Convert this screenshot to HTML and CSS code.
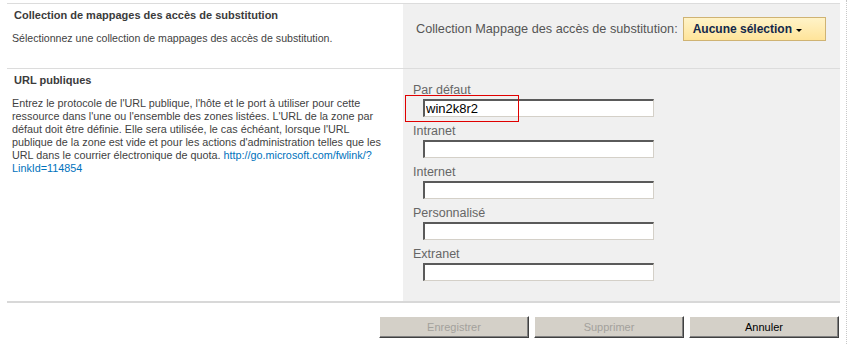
FILE: index.html
```html
<!DOCTYPE html>
<html lang="fr">
<head>
    <meta charset="UTF-8">
    <title>Mappages des accès de substitution</title>
    <link rel="stylesheet" href="styles.css">
</head>
<body>
    <div class="page">
        <div class="form">
            <div class="section first">
                <div class="desc-cell">
                    <h3 class="title">Collection de mappages des accès de substitution</h3>
                    <div class="desc short">Sélectionnez une collection de mappages des accès de substitution.</div>
                </div>
                <div class="ctrl-cell ctrl-inline">
                    <span class="ctrl-text">Collection Mappage des accès de substitution:</span>
                    <button class="picker">Aucune sélection <span class="arrow"></span></button>
                </div>
            </div>

            <div class="section">
                <div class="desc-cell">
                    <h3 class="title">URL publiques</h3>
                    <div class="desc">Entrez le protocole de l'URL publique, l'hôte et le port à utiliser pour cette ressource dans l'une ou l'ensemble des zones listées. L'URL de la zone par défaut doit être définie. Elle sera utilisée, le cas échéant, lorsque l'URL publique de la zone est vide et pour les actions d'administration telles que les URL dans le courrier électronique de quota. <a href="#">http://go.microsoft.com/fwlink/?<wbr>LinkId=114854</a></div>
                </div>
                <div class="ctrl-cell zones">
                    <div class="field">
                        <label>Par défaut</label>
                        <input type="text" value="win2k8r2">
                        <div class="highlight"></div>
                    </div>
                    <div class="field">
                        <label>Intranet</label>
                        <input type="text">
                    </div>
                    <div class="field">
                        <label>Internet</label>
                        <input type="text">
                    </div>
                    <div class="field">
                        <label>Personnalisé</label>
                        <input type="text">
                    </div>
                    <div class="field">
                        <label>Extranet</label>
                        <input type="text">
                    </div>
                </div>
            </div>

            <div class="buttons">
                <button class="btn" disabled>Enregistrer</button>
                <button class="btn" disabled>Supprimer</button>
                <button class="btn">Annuler</button>
            </div>
        </div>
    </div>
</body>
</html>
```

FILE: styles.css
```css
body {
    margin: 0;
    background: #fff;
    font-family: 'Liberation Sans', Arial, sans-serif;
    color: #4c4c4c;
}

.page {
    width: 847px;
    min-height: 100vh;
    box-sizing: border-box;
    padding: 3px 6px 0 7px;
    border-right: 1px dotted #c8c8c8;
}

.form {
    width: 833px;
    border-top: 1px solid #dcdcdc;
}

.section {
    display: grid;
    grid-template-columns: 396px 437px;
    border-bottom: 1px solid #dcdcdc;
}

.section + .section {
    border-bottom: 2px solid #d8d8d8;
}

.desc-cell {
    padding: 4px 5px 0 5px;
}

.title {
    margin: 0;
    padding-left: 2px;
    font-size: 11px;
    line-height: 15px;
    font-weight: bold;
    color: #3b3b3b;
}

.desc {
    margin-top: 9px;
    width: 376px;
    font-size: 10.8px;
    line-height: 13px;
    color: #3f3f3f;
}

.desc.short {
    font-size: 10.6px;
}

.desc a {
    color: #0072bc;
    text-decoration: none;
}

.ctrl-cell {
    background: #f0f0f0;
}

.ctrl-inline {
    display: flex;
    align-items: center;
    gap: 5px;
    padding: 13px 0 27px 13px;
}

.ctrl-text {
    font-size: 12.7px;
    color: #555;
}

.picker {
    height: 24px;
    width: 143px;
    padding: 0 0 0 9px;
    display: flex;
    align-items: center;
    gap: 4px;
    border: 1px solid #cfb373;
    background: linear-gradient(to bottom, #fff3c8, #ffe49a);
    font-family: 'Liberation Sans', Arial, sans-serif;
    font-size: 12px;
    font-weight: bold;
    color: #13284a;
}

.arrow {
    width: 0;
    height: 0;
    margin-top: 2px;
    border-left: 3px solid transparent;
    border-right: 3px solid transparent;
    border-top: 3px solid #000;
}

.zones {
    padding: 14px 0 20px 10px;
    display: flex;
    flex-direction: column;
    gap: 7px;
}

.field {
    position: relative;
    display: flex;
    flex-direction: column;
}

.field label {
    font-size: 12.5px;
    line-height: 15px;
    color: #666;
}

.field input {
    box-sizing: border-box;
    width: 231px;
    height: 18px;
    margin: 1px 0 0 10px;
    padding: 0 0 0 1px;
    border-top: 2px solid #5a5a5a;
    border-left: 2px solid #5a5a5a;
    border-right: 1px solid #d4d0c8;
    border-bottom: 1px solid #d4d0c8;
    background: #fff;
    font-family: 'Liberation Sans', Arial, sans-serif;
    font-size: 13px;
    color: #000;
    outline: none;
}

.highlight {
    position: absolute;
    left: -8px;
    top: 12px;
    width: 112px;
    height: 25px;
    border: 1px solid #e00000;
}

.buttons {
    display: flex;
    justify-content: flex-end;
    gap: 5px;
    padding: 13px 1px 0 0;
}

.btn {
    width: 150px;
    height: 22px;
    background: #d4d0c8;
    border: 1px solid;
    border-color: #fff #404040 #404040 #fff;
    box-shadow: inset -1px -1px #808080;
    font-family: 'Liberation Sans', Arial, sans-serif;
    font-size: 11px;
    font-weight: normal;
    color: #000;
}

.btn:disabled {
    color: #a3a19c;
}
```
